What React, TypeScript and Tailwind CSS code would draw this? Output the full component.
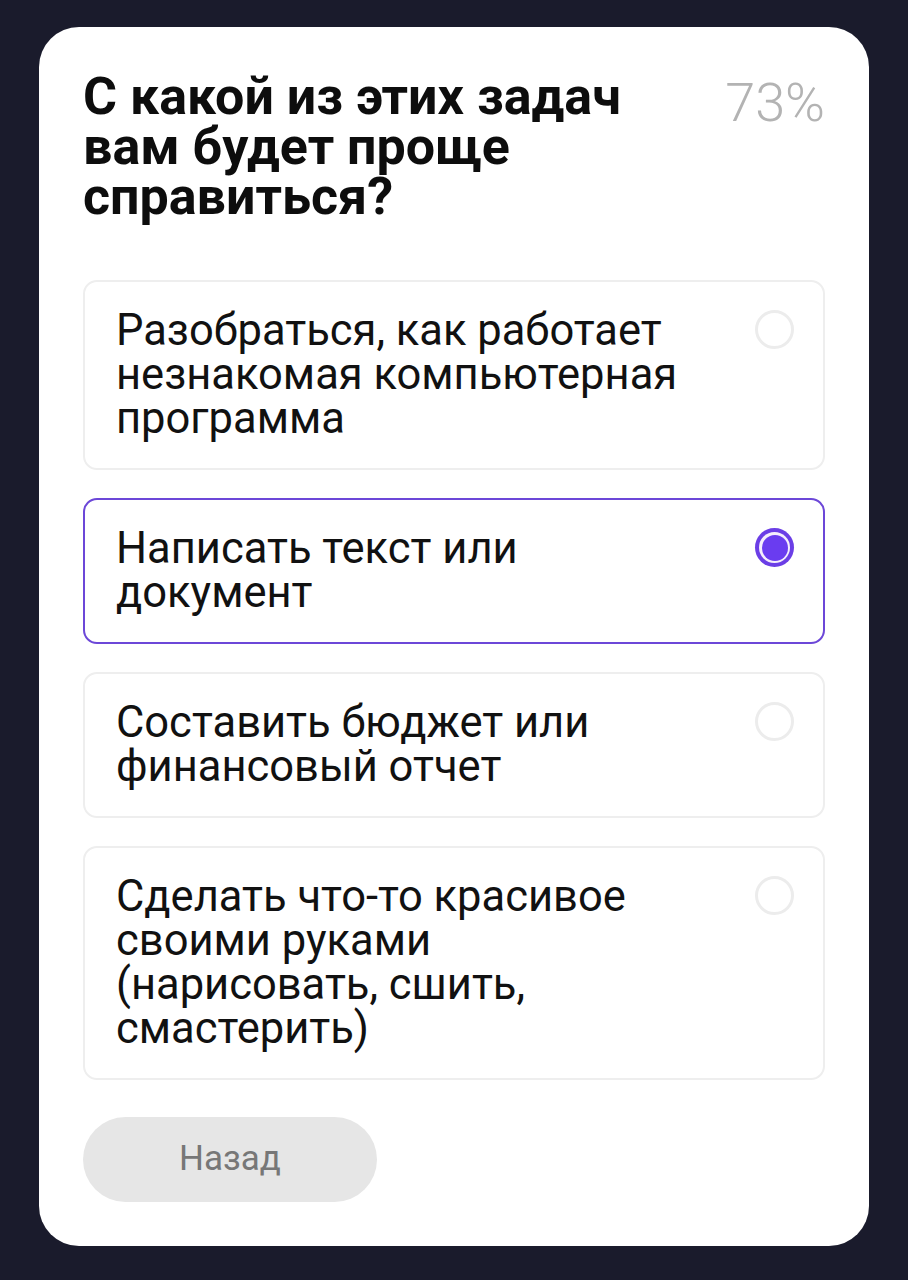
import React, { useState } from 'react';

interface Option {
  id: number;
  lines: string[];
}

const options: Option[] = [
  { id: 1, lines: ['Разобраться, как работает', 'незнакомая компьютерная', 'программа'] },
  { id: 2, lines: ['Написать текст или', 'документ'] },
  { id: 3, lines: ['Составить бюджет или', 'финансовый отчет'] },
  { id: 4, lines: ['Сделать что-то красивое', 'своими руками', '(нарисовать, сшить,', 'смастерить)'] },
];

const Radio = ({ checked }: { checked: boolean }) =>
  checked ? (
    <div className="flex h-[39px] w-[39px] items-center justify-center rounded-full bg-[#6b3ee6]">
      <div className="flex h-[31px] w-[31px] items-center justify-center rounded-full bg-[#f5eefc]">
        <div className="h-[26px] w-[26px] rounded-full bg-[#6a3cf0]" />
      </div>
    </div>
  ) : (
    <div className="h-[39px] w-[39px] rounded-full border-[3px] border-[#ececec]" />
  );

const App = () => {
  const [selected, setSelected] = useState(2);

  return (
    <div className="min-h-[1280px] w-[908px] bg-[#1a1b2c] px-[39px] pt-[27px] font-['Roboto',sans-serif]">
      <div className="w-[830px] rounded-[40px] bg-white px-[44px] pt-[45px] pb-[44px]">
        <div className="flex items-start justify-between">
          <h1 className="text-[52px] font-bold leading-[50px] text-[#0d0d0d]">
            С какой из этих задач
            <br />
            вам будет проще
            <br />
            справиться?
          </h1>
          <span className="mt-[4px] text-[54px] font-light leading-none text-[#b3b3b3]">73%</span>
        </div>

        <div className="mt-[58px] flex flex-col gap-[28px]">
          {options.map((o) => {
            const active = o.id === selected;
            return (
              <button
                key={o.id}
                onClick={() => setSelected(o.id)}
                className={`flex items-start justify-between rounded-[14px] border-2 pl-[31px] pr-[29px] pt-[27px] pb-[27px] text-left ${
                  active ? 'border-[#6c47d8]' : 'border-[#eeeeee]'
                }`}
              >
                <span className="text-[43.5px] leading-[44px] text-[#111]">
                  {o.lines.map((l, i) => (
                    <span key={i} className="block">
                      {l}
                    </span>
                  ))}
                </span>
                <span className="mt-[1px]">
                  <Radio checked={active} />
                </span>
              </button>
            );
          })}
        </div>

        <button className="mt-[37px] flex h-[85px] w-[294px] items-center justify-center rounded-full bg-[#e6e6e6] text-[35px] text-[#777777]">
          Назад
        </button>
      </div>
    </div>
  );
};

export default App;
